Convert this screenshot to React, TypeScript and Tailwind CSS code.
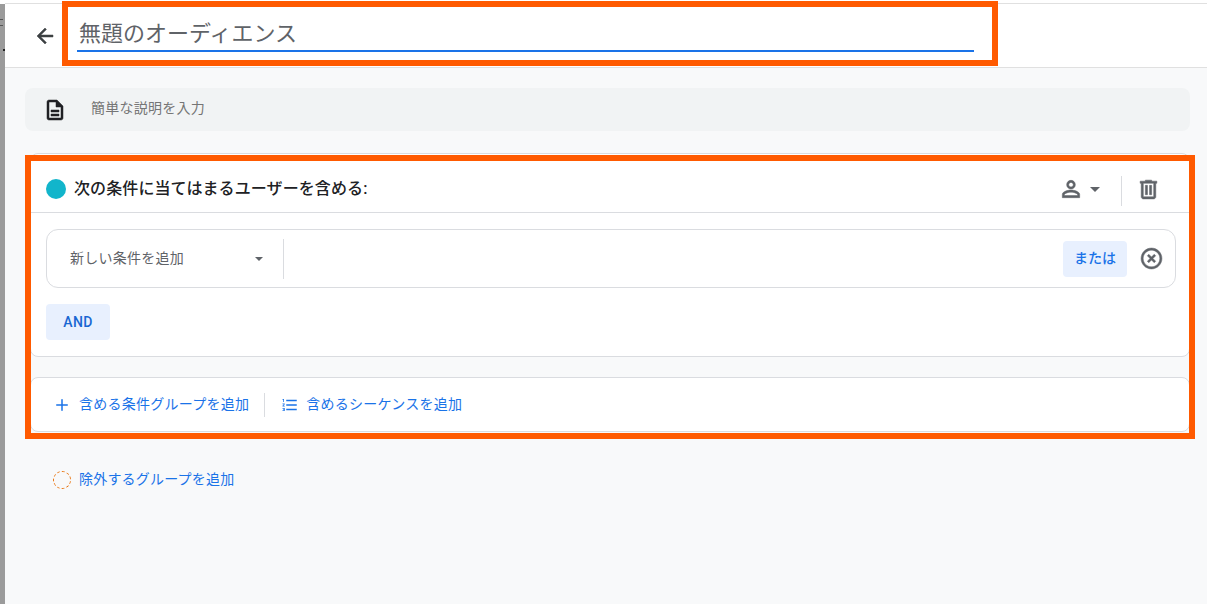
import { Plus } from "lucide-react";

const font = { fontFamily: 'Roboto, "Noto Sans CJK JP", sans-serif' };

function Caret({ className }: { className: string }) {
  return (
    <svg viewBox="0 0 10 5" className={className} fill="currentColor">
      <path d="M0 0l5 5 5-5z" />
    </svg>
  );
}

function Icon({ d, className, bold }: { d: string; className: string; bold?: boolean }) {
  return (
    <svg
      viewBox="0 0 24 24"
      className={className}
      fill="currentColor"
      stroke={bold ? "currentColor" : "none"}
      strokeWidth={bold ? 0.5 : 0}
    >
      <path d={d} />
    </svg>
  );
}

const arrowBack = "M20 11H7.83l5.59-5.59L12 4l-8 8 8 8 1.41-1.41L7.83 13H20v-2z";
const doc =
  "M8 16h8v2H8zm0-4h8v2H8zm6-10H6c-1.1 0-2 .9-2 2v16c0 1.1.89 2 1.99 2H18c1.1 0 2-.9 2-2V8l-6-6zm4 18H6V4h7v5h5v11z";
const person =
  "M12 5.9c1.16 0 2.1.94 2.1 2.1s-.94 2.1-2.1 2.1S9.9 9.16 9.9 8s.94-2.1 2.1-2.1m0 9c2.97 0 6.1 1.46 6.1 2.1v1.1H5.9V17c0-.64 3.13-2.1 6.1-2.1M12 4C9.79 4 8 5.79 8 8s1.79 4 4 4 4-1.79 4-4-1.79-4-4-4zm0 9c-2.67 0-8 1.34-8 4v3h16v-3c0-2.66-5.33-4-8-4z";
const trash =
  "M15 4V3H9v1H4v2h1v13c0 1.1.9 2 2 2h10c1.1 0 2-.9 2-2V6h1V4h-5zm2 15H7V6h10v13zM9 8h2v9H9zm4 0h2v9h-2z";
const clear =
  "M14.59 8L12 10.59 9.41 8 8 9.41 10.59 12 8 14.59 9.41 16 12 13.41 14.59 16 16 14.59 13.41 12 16 9.41 14.59 8zM12 2C6.47 2 2 6.47 2 12s4.47 10 10 10 10-4.47 10-10S17.53 2 12 2zm0 18c-4.41 0-8-3.59-8-8s3.59-8 8-8 8 3.59 8 8-3.59 8-8 8z";
const listNum =
  "M2 17h2v.5H3v1h1v.5H2v1h3v-4H2v1zm1-9h1V4H2v1h1v3zm-1 3h1.8L2 13.1v.9h3v-1H3.2L5 10.9V10H2v1zm5-6v2h14V5H7zm0 14h14v-2H7v2zm0-6h14v-2H7v2z";

export default function App() {
  return (
    <div className="relative flex h-[604px] w-[1207px] overflow-hidden bg-white" style={font}>
      {/* left edge of the window behind */}
      <div className="relative mt-[4px] w-[5px] shrink-0 bg-[#9b9b9b]">
        <span className="absolute left-0 top-[15px] h-px w-[3px] bg-[#555555]" />
        <span className="absolute left-0 top-[21px] h-px w-[3px] bg-[#555555]" />
        <span className="absolute left-[3px] top-[45px] h-[2px] w-[2px] bg-[#222222]" />
      </div>

      <div className="flex min-w-0 flex-1 flex-col">
        <div className="h-[4px] shrink-0 border-b border-[#e0e0e0]" />

        {/* header */}
        <header className="flex h-[64px] shrink-0 items-start border-b border-[#e0e0e0] bg-white pl-[28px]">
          <Icon d={arrowBack} className="mt-[20px] h-[24px] w-[24px] text-[#3c4043]" bold />
          <div className="ml-[20px] mt-[10px] h-[38px] w-[897px] border-b-2 border-[#1a73e8] pl-[2px] text-[22px] leading-[40px] text-[#5f6368]">
            無題のオーディエンス
          </div>
        </header>

        {/* body */}
        <main className="flex-1 bg-[#f8f9fa] pl-[20px] pr-[17px] pt-[20px]">
          <div className="flex h-[43px] items-center rounded-[8px] bg-[#f1f3f4] pl-[18px] text-[14px] tracking-[0.25px] text-[#757575]">
            <Icon d={doc} className="h-[24px] w-[24px] text-[#202124]" bold />
            <span className="mb-[4px] ml-[24px] leading-none">簡単な説明を入力</span>
          </div>

          <section className="ml-[5px] mt-[22px] h-[204px] rounded-[8px] border border-[#dadce0] bg-white">
            <div className="flex h-[59px] items-center border-b border-[#dadce0] pl-[15px] pr-[28px] pt-[12px]">
              <span className="h-[20px] w-[20px] rounded-full bg-[#12b5cb]" />
              <span className="ml-[8px] text-[16px] font-medium leading-[20px] tracking-[0.1px] text-[#202124]">
                次の条件に当てはまるユーザーを含める:
              </span>
              <div className="ml-auto flex items-center">
                <Icon d={person} className="h-[26px] w-[26px] text-[#5f6368]" bold />
                <Caret className="ml-[6px] h-[5px] w-[10px] text-[#5f6368]" />
                <span className="ml-[21px] mt-[4px] h-[30px] w-px bg-[#dadce0]" />
                <Icon d={trash} className="ml-[14px] h-[25px] w-[25px] text-[#5f6368]" bold />
              </div>
            </div>

            <div className="pl-[15px] pr-[13px] pt-[16px]">
              <div className="flex h-[59px] items-center rounded-[12px] border border-[#dadce0] pl-[23px] pr-[11px]">
                <span className="w-[185px] text-[14px] tracking-[0.25px] text-[#5f6368]">新しい条件を追加</span>
                <Caret className="h-[4px] w-[8px] text-[#5f6368]" />
                <span className="ml-[20px] h-[40px] w-px bg-[#dadce0]" />
                <button className="ml-auto h-[36px] w-[64px] rounded-[4px] bg-[#e8f0fe] text-[14px] font-medium text-[#1a73e8]">
                  または
                </button>
                <Icon d={clear} className="ml-[12px] h-[25px] w-[25px] text-[#5f6368]" bold />
              </div>
              <button className="mt-[16px] h-[36px] w-[64px] rounded-[4px] bg-[#e8f0fe] text-[14px] font-medium tracking-[0.4px] text-[#1967d2]">
                AND
              </button>
            </div>
          </section>

          <section className="ml-[5px] mt-[20px] flex h-[55px] items-center rounded-[8px] border border-[#dadce0] bg-white pl-[22px] text-[14px] tracking-[0.25px] text-[#1a73e8]">
            <Plus className="h-[18px] w-[18px]" strokeWidth={2} />
            <span className="ml-[8px]">含める条件グループを追加</span>
            <span className="ml-[15px] h-[24px] w-px bg-[#dadce0]" />
            <Icon d={listNum} className="ml-[16px] h-[18px] w-[18px]" />
            <span className="ml-[7px]">含めるシーケンスを追加</span>
          </section>

          <div className="ml-[28px] mt-[37px] flex items-center text-[14px] tracking-[0.2px] text-[#1a73e8]">
            <span className="h-[18px] w-[18px] rounded-full border border-dashed border-[#e8710a]" />
            <span className="ml-[8px]">除外するグループを追加</span>
          </div>
        </main>
      </div>

      {/* orange annotation boxes */}
      <div className="absolute left-[62px] top-[1px] h-[65px] w-[936px] border-[6px] border-[#ff5a00]" />
      <div className="absolute left-[25px] top-[155px] h-[284px] w-[1170px] border-[6px] border-[#ff5a00]" />
    </div>
  );
}
